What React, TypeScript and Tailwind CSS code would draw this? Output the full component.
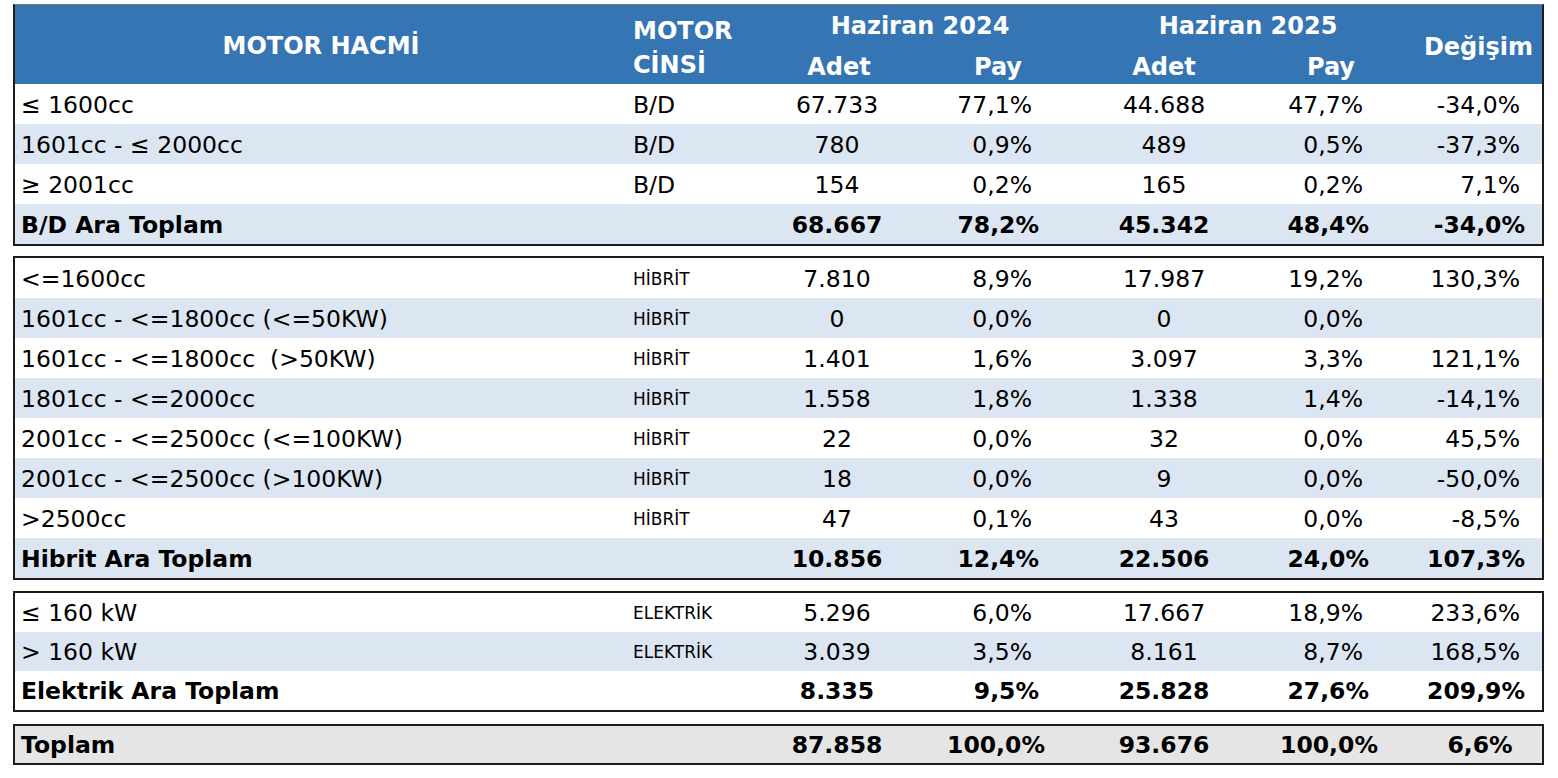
import React from "react";

type Row = { name: string; type: string; a1: string; p1: string; a2: string; p2: string; ch: string };

const GRID = "grid grid-cols-[612px_142px_136px_134px_250px_80px_1fr]";

const bd: Row[] = [
  { name: "≤ 1600cc", type: "B/D", a1: "67.733", p1: "77,1%", a2: "44.688", p2: "47,7%", ch: "-34,0%" },
  { name: "1601cc - ≤ 2000cc", type: "B/D", a1: "780", p1: "0,9%", a2: "489", p2: "0,5%", ch: "-37,3%" },
  { name: "≥ 2001cc", type: "B/D", a1: "154", p1: "0,2%", a2: "165", p2: "0,2%", ch: "7,1%" },
];

const hibrit: Row[] = [
  { name: "<=1600cc", type: "HİBRİT", a1: "7.810", p1: "8,9%", a2: "17.987", p2: "19,2%", ch: "130,3%" },
  { name: "1601cc - <=1800cc (<=50KW)", type: "HİBRİT", a1: "0", p1: "0,0%", a2: "0", p2: "0,0%", ch: "" },
  { name: "1601cc - <=1800cc  (>50KW)", type: "HİBRİT", a1: "1.401", p1: "1,6%", a2: "3.097", p2: "3,3%", ch: "121,1%" },
  { name: "1801cc - <=2000cc", type: "HİBRİT", a1: "1.558", p1: "1,8%", a2: "1.338", p2: "1,4%", ch: "-14,1%" },
  { name: "2001cc - <=2500cc (<=100KW)", type: "HİBRİT", a1: "22", p1: "0,0%", a2: "32", p2: "0,0%", ch: "45,5%" },
  { name: "2001cc - <=2500cc (>100KW)", type: "HİBRİT", a1: "18", p1: "0,0%", a2: "9", p2: "0,0%", ch: "-50,0%" },
  { name: ">2500cc", type: "HİBRİT", a1: "47", p1: "0,1%", a2: "43", p2: "0,0%", ch: "-8,5%" },
];

const elektrik: Row[] = [
  { name: "≤ 160 kW", type: "ELEKTRİK", a1: "5.296", p1: "6,0%", a2: "17.667", p2: "18,9%", ch: "233,6%" },
  { name: "> 160 kW", type: "ELEKTRİK", a1: "3.039", p1: "3,5%", a2: "8.161", p2: "8,7%", ch: "168,5%" },
];

function DataRow({ r, shaded, bold, small, short }: { r: Row; shaded: boolean; bold?: boolean; small?: boolean; short?: boolean }) {
  return (
    <div
      className={`${GRID} ${short ? "h-[39px]" : "h-[40px]"} items-center whitespace-pre pt-[3px] ${shaded ? "bg-[#dce6f2]" : "bg-white"} ${bold ? "font-bold" : ""}`}
    >
      <div className="pl-[6px]">{r.name}</div>
      <div className={`pl-[6px] ${small ? "text-[17px]" : ""}`}>{r.type}</div>
      <div className="flex justify-center">{r.a1}</div>
      <div className={`flex justify-end ${bold ? "pr-0" : "pr-[7px]"}`}>{r.p1}</div>
      <div className="flex justify-center">{r.a2}</div>
      <div className={`flex justify-end ${bold ? "pr-0" : "pr-[6px]"}`}>{r.p2}</div>
      <div className={`flex justify-end ${bold ? "pr-[17px]" : "pr-[22px]"}`}>{r.ch}</div>
    </div>
  );
}

export default function App() {
  return (
    <div className="min-h-screen bg-white pl-[13px] pt-[4px] text-[23.5px] text-black font-['DejaVu_Sans',sans-serif]">
      <div className="w-[1531px]">
        {/* B/D block with header */}
        <div className="border-2 border-t border-[#1c1c1c] border-t-[#777]">
          <div className={`${GRID} grid-rows-[40px_39px] bg-[#3675b3] font-bold text-[24px] text-white`}>
            <div className="row-span-2 flex items-center justify-center pt-[3px]">MOTOR HACMİ</div>
            <div className="row-span-2 flex flex-col justify-center pl-[6px] pt-[7px] leading-[34px]">
              <span>MOTOR</span>
              <span>CİNSİ</span>
            </div>
            <div className="col-span-2 flex items-center justify-center pl-[32px] pt-[2px]">Haziran 2024</div>
            <div className="col-span-2 flex items-center justify-center pl-[88px] pt-[2px]">Haziran 2025</div>
            <div className="row-span-2 flex items-center justify-end pr-[9px] pt-[4px]">Değişim</div>
            <div className="flex items-center justify-center pl-[4px] pt-[4px]">Adet</div>
            <div className="flex items-center justify-end pr-[17px] pt-[4px]">Pay</div>
            <div className="flex items-center justify-center pt-[4px]">Adet</div>
            <div className="flex items-center justify-end pr-[14px] pt-[4px]">Pay</div>
          </div>
          {bd.map((r, i) => (
            <DataRow key={r.name} r={r} shaded={i % 2 === 1} />
          ))}
          <DataRow r={{ name: "B/D Ara Toplam", type: "", a1: "68.667", p1: "78,2%", a2: "45.342", p2: "48,4%", ch: "-34,0%" }} shaded bold />
        </div>

        {/* Hibrit block */}
        <div className="mt-[10px] border-2 border-[#1c1c1c]">
          {hibrit.map((r, i) => (
            <DataRow key={r.name} r={r} shaded={i % 2 === 1} small />
          ))}
          <DataRow r={{ name: "Hibrit Ara Toplam", type: "", a1: "10.856", p1: "12,4%", a2: "22.506", p2: "24,0%", ch: "107,3%" }} shaded bold />
        </div>

        {/* Elektrik block */}
        <div className="mt-[11px] border-2 border-[#1c1c1c]">
          {elektrik.map((r, i) => (
            <DataRow key={r.name} r={r} shaded={i % 2 === 1} small short />
          ))}
          <DataRow r={{ name: "Elektrik Ara Toplam", type: "", a1: "8.335", p1: "9,5%", a2: "25.828", p2: "27,6%", ch: "209,9%" }} shaded={false} bold short />
        </div>

        {/* Toplam */}
        <div className="mt-[12px] border-2 border-[#1c1c1c]">
          <div className={`${GRID} h-[37px] items-center whitespace-nowrap bg-[#e5e5e5] pt-[2px] font-bold`}>
            <div className="pl-[6px]">Toplam</div>
            <div />
            <div className="flex justify-center">87.858</div>
            <div className="flex justify-center pl-[48px]">100,0%</div>
            <div className="flex justify-center">93.676</div>
            <div className="flex justify-center">100,0%</div>
            <div className="flex justify-center pl-[49px]">6,6%</div>
          </div>
        </div>
      </div>
    </div>
  );
}
